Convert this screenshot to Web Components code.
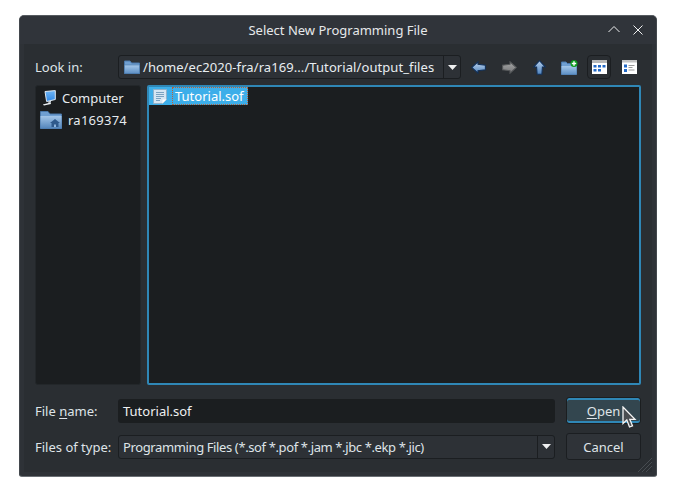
<!DOCTYPE html>
<html><head><meta charset="utf-8"><title>Select New Programming File</title>
<style>html,body{margin:0;padding:0;background:#fff;}body{font:13px/18px "Noto Sans",sans-serif;color:#eff0f1;width:676px;height:500px;overflow:hidden}</style>
</head><body>
<file-dialog>
  <title-bar slot="title">Select New Programming File</title-bar>
  <form-row label="Look in:">
    <path-combo>/home/ec2020-fra/ra169.../Tutorial/output_files</path-combo>
    <nav-tools></nav-tools>
  </form-row>
  <file-panes></file-panes>
  <form-row label="File name:" acc="n" gap><name-input>Tutorial.sof</name-input><action-button primary acc="O" rest="pen"></action-button></form-row>
  <form-row label="Files of type:" gap><type-combo>Programming Files (*.sof *.pof *.jam *.jbc *.ekp *.jic)</type-combo><action-button rest="Cancel"></action-button></form-row>
</file-dialog>
<script>
const def=(n,html)=>customElements.define(n,class extends HTMLElement{connectedCallback(){if(this.shadowRoot)return;const r=this.attachShadow({mode:'open'});r.innerHTML=typeof html==='function'?html(this):html;}});
const arrow=`<svg width="9" height="5" viewBox="0 0 9 5"><path d="M0 0H9L4.5 5Z" fill="#eff0f1"/></svg>`;
const grad=(id,a,b)=>`<defs><linearGradient id="${id}" x1="0" y1="0" x2="0" y2="1"><stop offset="0" stop-color="${a}"/><stop offset="1" stop-color="${b}"/></linearGradient></defs>`;
def('file-dialog',`<style>:host{display:flex;flex-direction:column;box-sizing:border-box;width:638px;height:462px;margin:15px 0 0 19px;background:#2e3237;border:1px solid #43484d;border-top-color:#565b60;border-bottom-color:#6a6f74;border-radius:5px 5px 3px 3px;position:relative;overflow:hidden}
.body{flex:1;display:flex;flex-direction:column;margin:0 4px 4px;padding:11px 11px 0;background:#2a2e32}
.grip{position:absolute;right:4px;bottom:4px}</style>
<slot name="title"></slot><div class="body"><slot></slot></div>
<svg class="grip" width="14" height="14" viewBox="0 0 14 14" stroke="#474c51" stroke-width="1"><path d="M0 14L14 0M4 14L14 4M8 14L14 8"/></svg>`);
def('title-bar',`<style>:host{display:flex;align-items:center;justify-content:center;height:28px;flex:none;background:#30343a;font-size:13px;position:relative;color:#e6e8ea}
.b{position:absolute;top:7px;display:block}</style><slot></slot>
<svg class="b" style="left:587px;top:6px" width="14" height="14" viewBox="0 0 14 14" fill="none" stroke="#eff0f1" stroke-width="1"><path d="M1.5 10L7 4.5L12.5 10"/></svg>
<svg class="b" style="left:611px" width="14" height="14" viewBox="0 0 14 14" fill="none" stroke="#eff0f1" stroke-width="1"><path d="M2.5 2.5L11.5 11.5M11.5 2.5L2.5 11.5"/></svg>`);
def('form-row',h=>{const l=h.getAttribute('label'),a=h.getAttribute('acc');let t=l;if(a){const i=l.indexOf(a);t=l.slice(0,i)+'<u>'+a+'</u>'+l.slice(i+1)}
return `<style>:host{display:flex;align-items:center;color:#dfe4e8;margin-bottom:${h.hasAttribute('gap')?'9px':'11px'}}label{width:83px;flex:none;font-size:13px}u{text-underline-offset:2px}</style><label>${t}</label><slot></slot>`});
def('path-combo',`<style>:host{display:flex;align-items:center;box-sizing:border-box;width:343px;height:24px;background:#2d3136;border:1px solid #1b1e21;border-radius:3px;font-size:13px;letter-spacing:.08px;padding-left:5px;flex:none}
span{flex:1;padding-left:3px;white-space:nowrap;color:#e8edf1}i{flex:none;width:16px;height:100%;border-left:1px solid #1b1e21;display:flex;align-items:center;justify-content:center}</style>
<svg width="16" height="14" viewBox="0 0 16 14">${grad('fg','#a5c8ea','#5d8fc4')}<path d="M0.5 1H6L7.5 3H15.5V13.5H0.5Z" fill="#6f9fd1" stroke="#4a78aa"/><path d="M0.5 5H15.5V13.5H0.5Z" fill="url(#fg)" stroke="#4a78aa" stroke-width=".6"/></svg><span><slot></slot></span><i>${arrow}</i>`);
def('nav-tools',`<style>:host{display:flex;align-items:center;height:24px;margin-left:10px;flex:none}svg{display:block}
.w{height:24px;display:flex;align-items:center;justify-content:center;box-sizing:border-box}.on{width:24px;border:1px solid #1b1e21;border-radius:4px;margin-right:11px}</style>
<div class="w" style="width:15px;margin-right:16px"><svg width="15" height="13" viewBox="0 0 15 13">${grad('a','#c3d8ef','#4f83bd')}<path d="M.7 6.5L7 .8V3.3L14.4 4.2V8.8L7 9.7V12.2Z" fill="url(#a)" stroke="#123058" stroke-width="1.1"/></svg></div>
<div class="w" style="width:15px;margin-right:16px"><svg width="15" height="13" viewBox="0 0 15 13">${grad('b','#a8a8a8','#747678')}<path d="M14.3 6.5L8 .8V3.3L.6 4.2V8.8L8 9.7V12.2Z" fill="url(#b)" stroke="#55585a" stroke-width="1.1"/></svg></div>
<div class="w" style="width:13px;margin-right:15px"><svg width="13" height="15" viewBox="0 0 13 15">${grad('c','#b5cfec','#4f83bd')}<path d="M6.5 .7L12.4 7H9.4L8.9 14.3H4.1L3.6 7H.6Z" fill="url(#c)" stroke="#123058" stroke-width="1.1"/></svg></div>
<div class="w" style="width:17px;margin-right:9px"><svg width="17" height="15" viewBox="0 0 17 15">${grad('d','#a5c8ea','#5d8fc4')}<path d="M.5 2H5L6.5 3.5H15.5V14.5H.5Z" fill="#6f9fd1" stroke="#4a78aa"/><path d="M.5 6H15.5V14.5H.5Z" fill="url(#d)"/><circle cx="13" cy="3.5" r="3.5" fill="#0a9a1d"/><path d="M13 1.3V5.7M10.8 3.5H15.2" stroke="#fff" stroke-width="1.4"/></svg></div>
<div class="w on"><svg width="15" height="14" viewBox="0 0 15 14"><rect width="15" height="14" fill="#fff"/><rect width="15" height="3" fill="#b8b8b8"/><path d="M1.5 5h3v2.5h-3zM6 5h3v2.5h-3zM10.5 5h3v2.5h-3zM1.5 9h3v2.5h-3zM6 9h3v2.5h-3z" fill="#2369c6"/></svg></div>
<div class="w"><svg width="15" height="14" viewBox="0 0 15 14"><rect width="15" height="14" fill="#fff"/><rect width="15" height="2.5" fill="#c4c4c4"/><path d="M2 4.5h3v3H2zM2 9h3v3H2z" fill="#2369c6"/><path d="M6.5 5h6v1h-6zM6.5 7h4v1h-4zM6.5 9.5h6v1h-6z" fill="#9a9a9a"/></svg></div>`);
def('file-panes',`<style>:host{display:flex;gap:6px;height:300px;margin:-5px 0 12px;flex:none}
.side{box-sizing:border-box;width:106px;background:#1b1e20;border:1px solid #23272a;border-radius:3px;padding:2px 0 0 4px;display:flex;flex-direction:column}
.it{display:flex;align-items:center;height:20px;font-size:13px;color:#e6ebef;margin-bottom:2px}
.r{letter-spacing:.25px}
.main{box-sizing:border-box;flex:1;width:494px;background:#1b1e20;border:2px solid #2f87b6;border-radius:2px}
.sel{display:inline-flex;align-items:center;height:18px;background:#3daee9;color:#fff;font-size:13px;padding-left:4px;vertical-align:top}
.n{margin-left:5px;padding:0 2px;height:18px;box-sizing:border-box;border:1px dotted #b5623a;display:flex;align-items:center;white-space:nowrap;width:76px}</style>
<div class="side"><div class="it"><svg width="14" height="16" viewBox="0 0 14 16" style="margin-left:2px;margin-right:6px">${grad('s','#6fb6f5','#2f86e4')}<path d="M3 1.5L13.3 .6V9.5L4.6 11.5Z" fill="url(#s)" stroke="#dfe8f1"/><path d="M6 11.5L9 10.5L9 12.5L6.5 13Z" fill="#c9d3dc"/><path d="M.8 14.6L8.5 12.5L9 14L2 15.6Z" fill="#eef2f5"/></svg><span>Computer</span></div>
<div class="it"><svg width="22" height="18" viewBox="0 0 22 18" style="margin-right:6px">${grad('h','#a4c6e8','#5385bb')}<path d="M.5 .5H8L10 3H21.5V17.5H.5Z" fill="#6f9fd1" stroke="#4a78aa"/><path d="M.5 5H21.5V17.5H.5Z" fill="url(#h)"/><path d="M15 8L10 12H11.5V16H18.5V12H20Z" fill="#2f5a8c"/><path d="M14 13.5h2v2.5h-2z" fill="#8fb5dc"/></svg><span class="r">ra169374</span></div></div>
<div class="main"><div class="sel"><svg width="14" height="15" viewBox="0 0 14 15"><path d="M.5 .5H13.5V10.5L9.5 14.5H.5Z" fill="#d6e6f3" stroke="#8fb2cc"/><path d="M3 3.5h8M3 5.5h8M3 7.5h8M3 9.5h5M3 11.5h4" stroke="#7ba2c0"/><path d="M9.5 14.5V10.5H13.5Z" fill="#fff"/></svg><span class="n">Tutorial.sof</span></div></div>`);
def('name-input',`<style>:host{display:flex;align-items:center;box-sizing:border-box;width:437px;height:24px;background:#1b1e20;border-radius:3px;font-size:13px;padding-left:5px;flex:none;color:#eff0f1;margin:1px 11px 0 0}</style><slot></slot>`);
def('type-combo',`<style>:host{display:flex;align-items:center;box-sizing:border-box;width:437px;height:24px;background:#2d3136;border:1px solid #1b1e21;border-radius:3px;font-size:13px;letter-spacing:-.38px;padding-left:4px;flex:none;margin:0 11px 0 0}span{flex:1;white-space:nowrap}i{width:16px;height:100%;border-left:1px solid #1b1e21;display:flex;align-items:center;justify-content:center}</style><span><slot></slot></span><i>${arrow}</i>`);
def('action-button',h=>{const p=h.hasAttribute('primary'),a=h.getAttribute('acc')||'',r=h.getAttribute('rest');
return `<style>:host{display:flex;align-items:center;justify-content:center;box-sizing:border-box;width:75px;height:27px;flex:none;font-size:13px;position:relative;border-radius:3px;
${p?'background:#33464f;border:1px solid #1b1e20;box-shadow:inset 0 2px 0 #2f87b6,inset 0 -2px 0 #2f87b6;':'background:#2f3338;border:1px solid #1b1e21;'}}u{text-underline-offset:2px}
svg{position:absolute;left:55px;top:8px}</style><span><u>${a}</u>${r}</span>${p?`<svg width="16" height="23" viewBox="0 0 16 23"><path d="M1 1V17.5L4.8 14L7.5 21L10.5 19.8L7.8 13.3H13Z" fill="#4a4d50" stroke="#f4f4f4" stroke-width="1.3"/></svg>`:''}`});
</script>
</body></html>
